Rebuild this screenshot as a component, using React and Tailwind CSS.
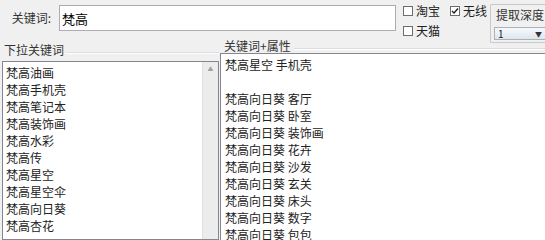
import { useState } from "react";

const dropdownWords = ["梵高油画", "梵高手机壳", "梵高笔记本", "梵高装饰画", "梵高水彩", "梵高传", "梵高星空", "梵高星空伞", "梵高向日葵", "梵高杏花"];

const attrWords = ["梵高星空 手机壳", "", "梵高向日葵 客厅", "梵高向日葵 卧室", "梵高向日葵 装饰画", "梵高向日葵 花卉", "梵高向日葵 沙发", "梵高向日葵 玄关", "梵高向日葵 床头", "梵高向日葵 数字", "梵高向日葵 包包"];

const CheckBox = ({ label, checked, onToggle }) => (
    <label className="flex items-center gap-[3px] cursor-default whitespace-nowrap shrink-0" onClick={onToggle}>
        <span className="w-[10px] h-[10px] shrink-0 border border-[#6d6d6d] bg-white flex items-center justify-center">
            {checked && (
                <svg width="8" height="8" viewBox="0 0 8 8">
                    <path d="M1 4 L3 6 L7 1.5" stroke="#222" strokeWidth="1.4" fill="none" />
                </svg>
            )}
        </span>
        <span>{label}</span>
    </label>
);

const GroupTitle = ({ title }) => (
    <div className="flex items-center h-[17px] pl-[4px]">
        <span className="leading-[14px] -mt-[5px] pr-[3px] text-[#333] whitespace-nowrap">{title}</span>
        <div className="flex-1 border-t border-[#dcdcdc] border-b-white border-b" />
    </div>
);

export default function App() {
    const [taobao, setTaobao] = useState(false);
    const [wireless, setWireless] = useState(true);
    const [tmall, setTmall] = useState(false);

    return (
        <div className="w-[545px] h-[240px] overflow-hidden bg-[#f0f0f0] text-[12px] text-[#222] flex flex-col" style={{ fontFamily: '"Noto Sans CJK SC", "Noto Sans", sans-serif' }}>
            {/* top row */}
            <div className="h-[44px] flex items-start shrink-0">
                <div className="w-[51px] shrink-0 text-right pt-[10px] leading-[16px] text-[#333] whitespace-nowrap">关键词:</div>
                <input
                    defaultValue="梵高"
                    className="ml-[8px] mt-[5px] w-[337px] shrink-0 h-[26px] border border-[#abadb3] bg-white pl-[2px] text-[13px] text-black outline-none"
                    style={{ fontFamily: '"Noto Sans CJK SC", sans-serif' }}
                />
                <div className="ml-[7px] w-[82px] shrink-0 pt-[3px] flex flex-col gap-[4px] leading-[16px]">
                    <div className="flex gap-[10px]">
                        <CheckBox label="淘宝" checked={taobao} onToggle={() => setTaobao(!taobao)} />
                        <CheckBox label="无线" checked={wireless} onToggle={() => setWireless(!wireless)} />
                    </div>
                    <CheckBox label="天猫" checked={tmall} onToggle={() => setTmall(!tmall)} />
                </div>
                <div className="ml-[5px] mt-[4px] w-[56px] shrink-0 h-[39px] border border-r-0 border-[#c8c8c8] rounded-l-[2px] pl-[3px] flex flex-col">
                    <div className="pl-[2px] pt-[2px] leading-[16px] text-[#333] whitespace-nowrap">提取深度</div>
                    <div className="mt-[4px] h-[13px] border border-r-0 border-[#a8b2bd] bg-gradient-to-b from-[#f6f9fc] to-[#dde6ee] flex items-center justify-between pl-[3px] pr-[4px] text-[10px] leading-[12px]">
                        <span>1</span>
                        <span className="text-[7px] text-[#333]">▼</span>
                    </div>
                </div>
            </div>

            {/* bottom groups */}
            <div className="flex flex-1 min-h-0">
                <div className="w-[219px] shrink-0 flex flex-col">
                    <GroupTitle title="下拉关键词" />
                    <div className="ml-[2px] flex-1 border border-[#828790] bg-white flex">
                        <div className="flex-1 pt-[2px] pl-[3px] leading-[17px]">
                            {dropdownWords.map((w) => (
                                <div key={w}>{w}</div>
                            ))}
                        </div>
                        <div className="w-[16px] bg-[#ececec] border-l border-[#e0e0e0] flex justify-center pt-[3px]">
                            <span className="text-[6px] text-[#a0a0a0] leading-[8px]">▲</span>
                        </div>
                    </div>
                </div>
                <div className="flex-1 flex flex-col ml-[1px]">
                    <GroupTitle title="关键词+属性" />
                    <div className="flex-1 border border-r-0 border-[#828790] bg-white pt-[2px] pl-[4px] leading-[17px]">
                        {attrWords.map((w, i) => (
                            <div key={i} className="h-[17px] whitespace-nowrap">{w}</div>
                        ))}
                    </div>
                </div>
            </div>
        </div>
    );
}
